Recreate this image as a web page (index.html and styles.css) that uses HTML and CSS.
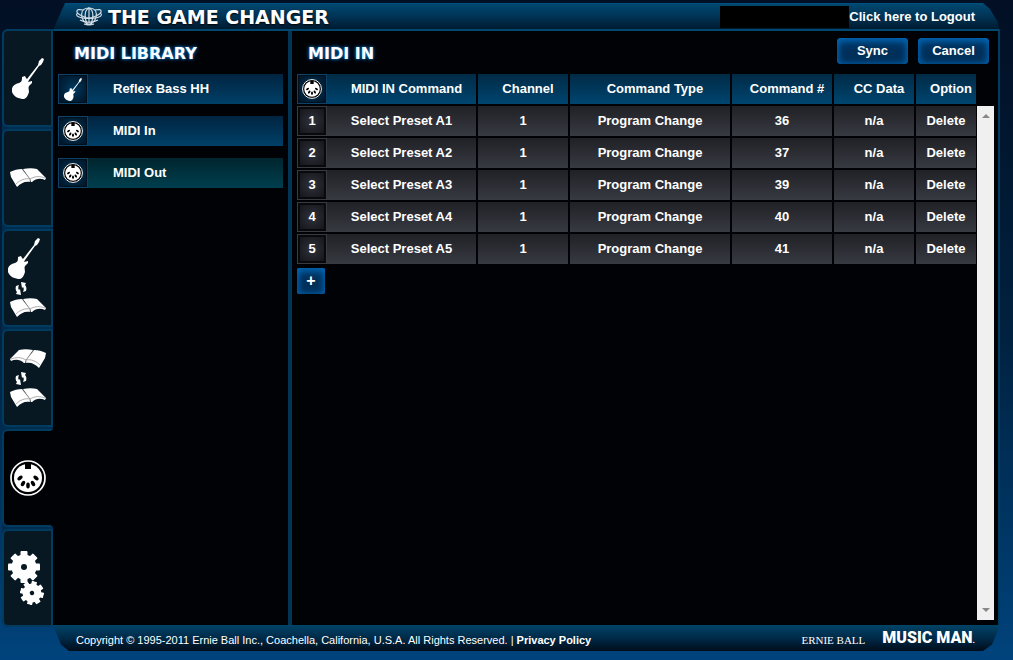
FILE: index.html
```html
<!DOCTYPE html>
<html lang="en">
<head>
<meta charset="utf-8">
<title>The Game Changer</title>
<link rel="stylesheet" href="styles.css">
</head>
<body>
<svg class="defs" aria-hidden="true">
  <symbol id="guitar" viewBox="0 0 32 41">
    <path d="M30 0l2 1-1 3-2 3-2 1L17 22l-1 2 4-1v2l-3 3c-1 2 0 4 0 6-1 3-2 6-5 7-5 0-10-2-12-7-1-5 2-8 7-9 3-1 3-3 3-6l3-1 1 2 1 1L26 7l1-4z"/>
  </symbol>
  <symbol id="book" viewBox="0 0 36 20">
    <path d="M0 4C4 2 8 1 12 1l8 10v3c-5-1-9 1-13 5L1 9z"/>
    <path d="M13 1c5-1 10-1 14 0l9 9-1 2c-4-2-9-2-13 2h-1l-1-3z"/>
    <path class="crease" d="M12 1l8 10v3M6 16c4-4 9-6 14-5 5-3 10-3 15-1"/>
  </symbol>
  <symbol id="swap" viewBox="0 0 12 13">
    <path d="M1 4C0 7 1 9 2 10l-1 2 5 1-1-6-1 1C3 7 3 5 4 3z"/>
    <path d="M11 9c1-3 0-5-1-6l1-2-5-1 1 6 1-1c1 1 1 3 0 5z"/>
  </symbol>
  <symbol id="midi" viewBox="0 0 36 36">
    <circle cx="18" cy="18" r="17" fill="#000" stroke="#fff" stroke-width="1.7"/>
    <circle cx="18" cy="18" r="14"/>
    <g fill="#000">
      <path d="M15 3h6v6h-6z"/>
      <ellipse cx="10" cy="18" rx="1.8" ry="3" transform="rotate(55 10 18)"/>
      <ellipse cx="26" cy="18" rx="1.8" ry="3" transform="rotate(-55 26 18)"/>
      <ellipse cx="13" cy="23.5" rx="1.8" ry="3" transform="rotate(30 13 23.5)"/>
      <ellipse cx="23" cy="23.5" rx="1.8" ry="3" transform="rotate(-30 23 23.5)"/>
      <ellipse cx="18" cy="25.5" rx="1.8" ry="3"/>
    </g>
  </symbol>
  <symbol id="gear" viewBox="0 0 32 32">
    <circle cx="16" cy="16" r="12.5"/>
    <rect x="12.5" width="7" height="32" rx="1"/>
    <rect x="12.5" width="7" height="32" rx="1" transform="rotate(45 16 16)"/>
    <rect x="12.5" width="7" height="32" rx="1" transform="rotate(90 16 16)"/>
    <rect x="12.5" width="7" height="32" rx="1" transform="rotate(135 16 16)"/>
    <circle cx="16" cy="16" r="3" fill="#071823"/>
  </symbol>
</svg>

<div class="app">
  <header class="topbar">
    <div class="brand">
      <svg class="logo" viewBox="0 0 26 20" aria-hidden="true">
        <path d="M13 1C3 1 4 12 11 17M13 1c10 0 9 11 2 16M13 1C8 3 8 12 12 18M13 1c5 2 5 11 1 17M13 1v17"/>
        <path d="M7 3C-1 1-1 6 6 9c6 3 13 3 17 1 3-1 3-3 1-4M19 3c8-2 8 3 1 6-6 3-13 3-17 1-3-1-3-3-1-4"/>
        <path d="M4 13c5 3 13 3 18 0M8 17c3 1 7 1 10 0"/>
      </svg>
      <h1>THE GAME CHANGER</h1>
    </div>
    <div class="user">
      <span class="user-name"></span>
      <a href="#">Click here to Logout</a>
    </div>
  </header>

  <nav class="tabs">
    <a class="tab" href="#" aria-label="Guitar"><svg class="i-guitar"><use href="#guitar"/></svg></a>
    <a class="tab" href="#" aria-label="Library"><svg class="i-book"><use href="#book"/></svg></a>
    <a class="tab sync" href="#" aria-label="Guitar to library">
      <svg class="i-guitar"><use href="#guitar"/></svg>
      <svg class="i-swap"><use href="#swap"/></svg>
      <svg class="i-book"><use href="#book"/></svg>
    </a>
    <a class="tab sync" href="#" aria-label="Library to library">
      <svg class="i-book flip"><use href="#book"/></svg>
      <svg class="i-swap"><use href="#swap"/></svg>
      <svg class="i-book"><use href="#book"/></svg>
    </a>
    <a class="tab active" href="#" aria-label="MIDI"><svg class="i-midi"><use href="#midi"/></svg></a>
    <a class="tab gears" href="#" aria-label="Settings">
      <svg class="i-gear"><use href="#gear"/></svg>
      <svg class="i-gear small"><use href="#gear"/></svg>
    </a>
  </nav>

  <aside class="library">
    <h2>MIDI LIBRARY</h2>
    <ul>
      <li><a href="#"><span class="box blue"><svg class="i-guitar"><use href="#guitar"/></svg></span>Reflex Bass HH</a></li>
      <li><a href="#"><span class="box blue"><svg class="i-midi"><use href="#midi"/></svg></span>MIDI In</a></li>
      <li><a class="out" href="#"><span class="box blue"><svg class="i-midi"><use href="#midi"/></svg></span>MIDI Out</a></li>
    </ul>
  </aside>

  <main class="content">
    <div class="content-head">
      <h2>MIDI IN</h2>
      <button type="button" class="btn">Sync</button>
      <button type="button" class="btn">Cancel</button>
    </div>
    <div class="list">
      <div class="list-body">
        <table>
          <colgroup>
            <col class="c-command"><col class="c-channel"><col class="c-type"><col class="c-number"><col class="c-data"><col class="c-option">
          </colgroup>
          <thead>
            <tr>
              <th><div class="first"><span class="box blue"><svg class="i-midi"><use href="#midi"/></svg></span><span class="name">MIDI IN Command</span></div></th>
              <th>Channel</th>
              <th>Command Type</th>
              <th>Command #</th>
              <th>CC Data</th>
              <th>Option</th>
            </tr>
          </thead>
          <tbody>
            <tr>
              <td><div class="first"><span class="box">1</span><span class="name">Select Preset A1</span></div></td>
              <td>1</td><td>Program Change</td><td>36</td><td>n/a</td>
              <td><a href="#">Delete</a></td>
            </tr>
            <tr>
              <td><div class="first"><span class="box">2</span><span class="name">Select Preset A2</span></div></td>
              <td>1</td><td>Program Change</td><td>37</td><td>n/a</td>
              <td><a href="#">Delete</a></td>
            </tr>
            <tr>
              <td><div class="first"><span class="box">3</span><span class="name">Select Preset A3</span></div></td>
              <td>1</td><td>Program Change</td><td>39</td><td>n/a</td>
              <td><a href="#">Delete</a></td>
            </tr>
            <tr>
              <td><div class="first"><span class="box">4</span><span class="name">Select Preset A4</span></div></td>
              <td>1</td><td>Program Change</td><td>40</td><td>n/a</td>
              <td><a href="#">Delete</a></td>
            </tr>
            <tr>
              <td><div class="first"><span class="box">5</span><span class="name">Select Preset A5</span></div></td>
              <td>1</td><td>Program Change</td><td>41</td><td>n/a</td>
              <td><a href="#">Delete</a></td>
            </tr>
          </tbody>
        </table>
        <button type="button" class="btn add" aria-label="Add command">+</button>
      </div>
      <div class="scrollbar" aria-hidden="true">
        <svg viewBox="0 0 8 4"><path d="M0 4l4-4 4 4z"/></svg>
        <svg viewBox="0 0 8 4"><path d="M0 0l4 4 4-4z"/></svg>
      </div>
    </div>
  </main>

  <footer class="bottombar">
    <p>Copyright © 1995-2011 Ernie Ball Inc., Coachella, California, U.S.A. All Rights Reserved. | <a href="#">Privacy Policy</a></p>
    <span class="ernie">ERNIE BALL</span>
    <span class="musicman">MUSIC MAN<small>.</small></span>
  </footer>
</div>
</body>
</html>
```
FILE: styles.css
```css
*{
  margin:0;
  padding:0;
  box-sizing:border-box;
}
body{
  background:linear-gradient(#020f24,#00213f 50%,#00437c);
  color:#fff;
  font:bold 13px/16px "Liberation Sans",Arial,sans-serif;
}
a{
  color:#fff;
  text-decoration:none;
}
svg{
  display:block;
  fill:#fff;
}
.defs{
  position:absolute;
  width:0;
  height:0;
}
.app{
  display:grid;
  grid-template-columns:51px 239px 1fr;
  grid-template-rows:28px 1fr 26px;
  min-height:100vh;
  padding:3px 13px 9px 2px;
}

/* top bar */
.topbar{
  grid-column:1 / -1;
  margin-left:51px;
  padding:0 25px 0 23px;
  display:flex;
  align-items:center;
  justify-content:space-between;
  background:linear-gradient(#004870,#003355 50%,#001b30);
  border-top:1px solid #00507f;
  border-bottom:2px solid #004870;
  clip-path:polygon(0 100%,2px 80%,12px 0,calc(100% - 17px) 0,calc(100% - 10px) 6px,calc(100% - 3px) 18px,100% 100%);
}
.brand,
.user{
  display:flex;
  align-items:center;
}
.brand{
  gap:6px;
}
.logo{
  width:26px;
  height:20px;
  fill:none;
  stroke:#cfdbe4;
  stroke-width:1.2;
}
h1{
  font:bold 19px/24px "DejaVu Sans",sans-serif;
  text-shadow:0 1px 2px #000;
}
.user-name{
  width:129px;
  height:22px;
  background:#000;
}

/* left tabs */
.tabs{
  display:flex;
  flex-direction:column;
  gap:2px;
  margin:-2px 0;
  background:#002c50;
  border-radius:6px 0 0 6px;
}
.tab{
  flex:1;
  display:flex;
  flex-direction:column;
  align-items:center;
  justify-content:center;
  border:2px solid #003b60;
  border-radius:6px 0 0 6px;
  background:#071823;
}
.tab.active{
  background:#000206;
  border-right-color:#000206;
}
.i-guitar{
  width:32px;
  height:41px;
}
.i-book{
  width:36px;
  height:20px;
}
.i-swap{
  width:12px;
  height:13px;
}
.i-midi{
  width:36px;
  height:36px;
}
.i-gear{
  width:32px;
  height:32px;
}
.i-gear.small{
  width:24px;
  height:24px;
}
.sync{
  gap:3px;
}
.sync .i-guitar,
.gears .i-gear{
  margin-right:7px;
}
.sync .i-swap{
  margin-right:14px;
}
.gears .small{
  margin:-2px 0 0 9px;
  transform:rotate(12deg);
}
.flip{
  transform:scaleX(-1);
}
.crease{
  fill:none;
  stroke:#888;
  stroke-width:.7;
}

/* library */
.library{
  background:#000206;
  border-right:4px solid #003556;
  padding:0 5px;
}
h2{
  font:bold 16px/20px "DejaVu Sans",sans-serif;
  text-shadow:0 0 2px #0a7ad0,0 0 4px #0a7ad0;
}
.library h2{
  padding:13px 0 10px 16px;
}
.library ul{
  display:grid;
  gap:12px;
  list-style:none;
}
.library li a{
  display:flex;
  align-items:center;
  gap:25px;
  background:linear-gradient(#002440,#004068);
}
.library li a.out{
  background:linear-gradient(#00252e,#003f4f);
}
.box{
  flex:none;
  width:30px;
  height:30px;
  display:flex;
  align-items:center;
  justify-content:center;
  background:radial-gradient(#30323a,#101116);
  border:1px solid #3a3b40;
  box-shadow:inset 0 0 0 2px #08090c;
}
.box.blue{
  background:radial-gradient(#003a60,#001120);
  border-color:#0b4468;
  box-shadow:inset 0 0 0 1px #00101e;
}
.box .i-guitar{
  width:18px;
  height:23px;
}
.box .i-midi{
  width:20px;
  height:20px;
}

/* midi in */
.content{
  display:flex;
  flex-direction:column;
  background:#000206;
  border-right:2px solid #003b60;
}
.content-head{
  display:flex;
  align-items:center;
  gap:10px;
  height:43px;
  padding:0 9px 4px 16px;
}
.content-head h2{
  margin-right:auto;
  padding-top:6px;
}
.btn{
  width:71px;
  height:26px;
  border:0;
  border-radius:4px;
  background:#00305a;
  box-shadow:inset 0 3px 8px #0068b8,inset 0 0 6px #005a9e;
  color:#fff;
  font:inherit;
}
.btn.add{
  display:block;
  width:28px;
  margin-top:4px;
  border-radius:2px;
  font-size:16px;
}
.list{
  flex:1;
  display:flex;
  gap:1px;
  padding:0 4px 5px 5px;
}
.list-body{
  flex:1;
}
table{
  width:calc(100% + 4px);
  margin:-2px;
  table-layout:fixed;
  border-spacing:2px;
}
.c-command{ width:179px; }
.c-channel{ width:90px; }
.c-type{ width:160px; }
.c-number{ width:100px; }
.c-data{ width:80px; }
.c-option{ width:60px; }
th,
td{
  height:30px;
  text-align:center;
}
th{
  padding-left:10px;
  background:linear-gradient(#002b45,#004570);
}
td{
  background:linear-gradient(#202126,#383a42);
}
th:first-child{
  padding-left:0;
}
.first{
  display:flex;
  align-items:center;
}
.name{
  flex:1;
}
th .name{
  padding-left:10px;
}
.scrollbar{
  width:17px;
  margin-top:32px;
  padding:8px 0;
  display:flex;
  flex-direction:column;
  align-items:center;
  justify-content:space-between;
  background:#f0f0f0;
}
.scrollbar svg{
  width:8px;
  height:4px;
  fill:#888;
}

/* bottom bar */
.bottombar{
  grid-column:1 / -1;
  margin-left:51px;
  padding:3px 25px 0 23px;
  display:flex;
  align-items:center;
  gap:17px;
  background:linear-gradient(#004468,#002a48 50%,#000d1a);
  clip-path:polygon(0 0,8px 75%,16px 100%,calc(100% - 17px) 100%,calc(100% - 8px) 75%,100% 0);
}
.bottombar p{
  margin-right:auto;
  font-size:11px;
  font-weight:normal;
}
.bottombar a{
  font-weight:bold;
}
.ernie{
  font:11px/20px "Liberation Serif",serif;
}
.musicman{
  font:900 16px/20px Roboto,"Liberation Sans",sans-serif;
}
.musicman small{
  font-size:8px;
}
```
